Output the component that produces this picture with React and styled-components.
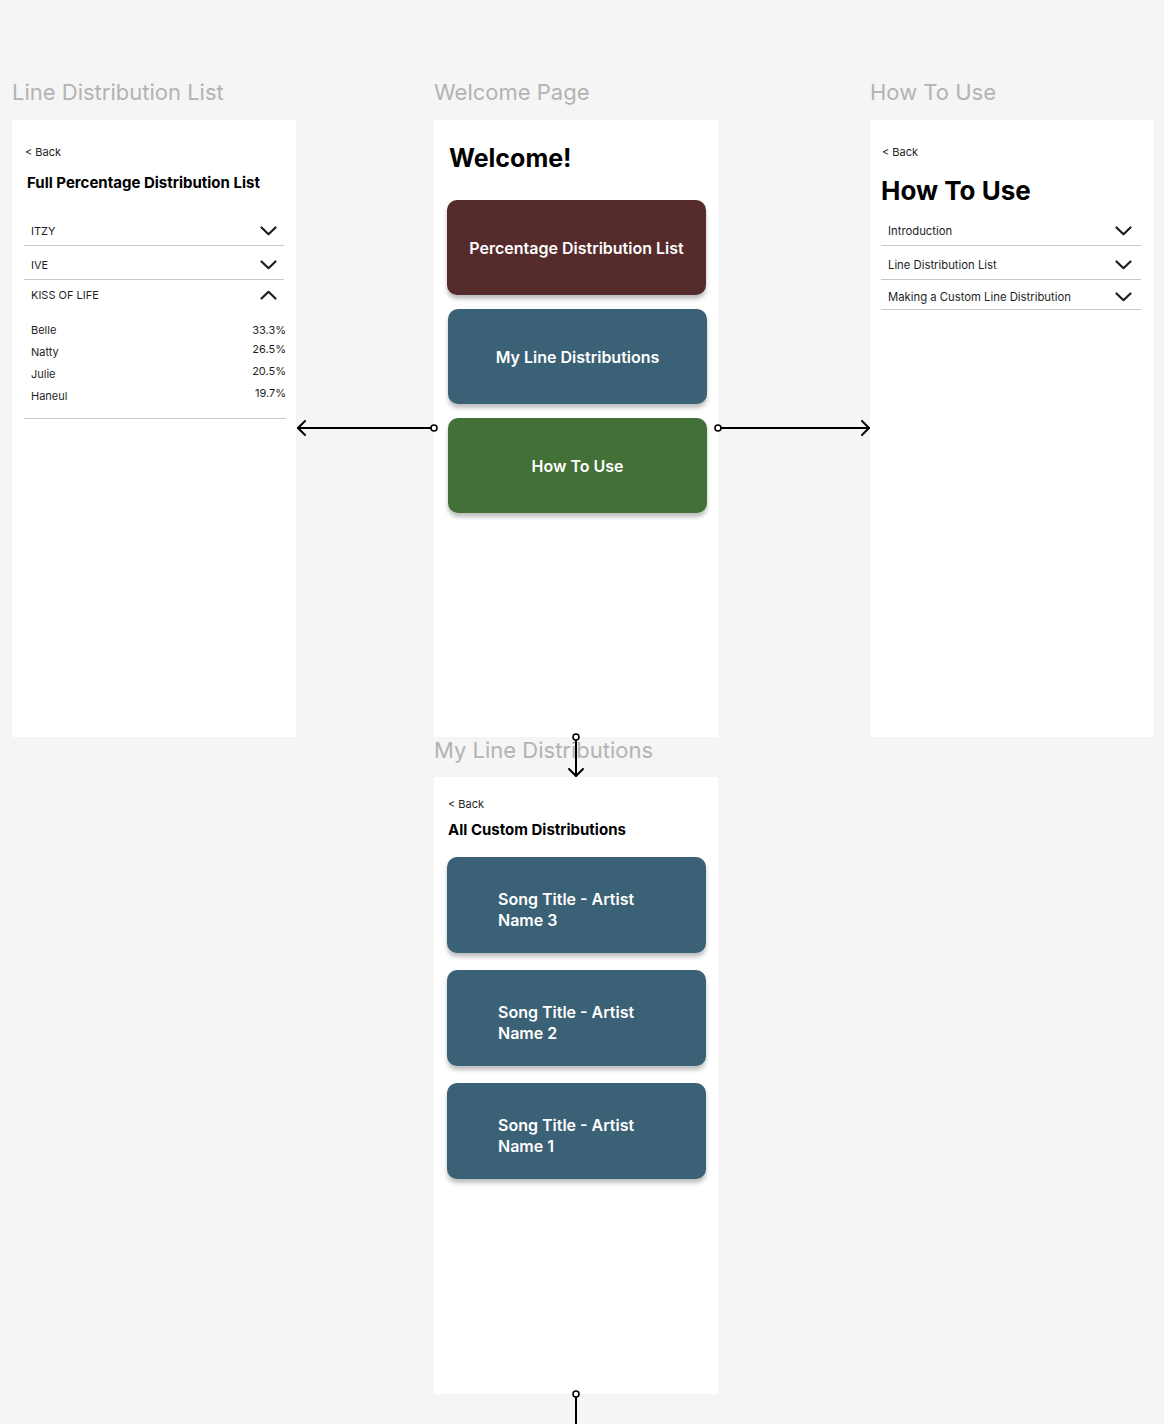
import React from "react";
import styled, { createGlobalStyle } from "styled-components";

const GlobalStyle = createGlobalStyle`
  body {
    margin: 0;
    background: #f5f5f5;
    font-family: Inter, "Noto Sans", sans-serif;
    color: #1e1e1e;
  }
`;

const Canvas = styled.div`
  position: relative;
  width: 1164px;
  min-height: 1424px;
  display: flex;
  align-items: flex-start;
  padding: 76px 0 0 12px;
  box-sizing: border-box;
  overflow: hidden;
`;

const Column = styled.div`
  width: 284px;
  margin-right: ${(p) => p.gap || 0}px;
  display: flex;
  flex-direction: column;
`;

const FrameLabel = styled.div`
  font-size: 22px;
  line-height: ${(p) => (p.lower ? 26 : 32)}px;
  height: ${(p) => (p.lower ? 26 : 32)}px;
  margin-bottom: ${(p) => (p.lower ? 14 : 12)}px;
  color: #b3b3b3;
  white-space: nowrap;
`;

const Frame = styled.div`
  background: #fff;
  height: 617px;
  box-sizing: border-box;
  padding: ${(p) => p.pad || "0"};
  display: flex;
  flex-direction: column;
`;

const Back = styled.div`
  font-size: 11px;
  line-height: 14px;
  margin-left: ${(p) => p.inset || 0}px;
  color: #1e1e1e;
`;

const SmallTitle = styled.div`
  font-size: 15px;
  font-weight: 700;
  line-height: 20px;
  margin: ${(p) => p.m || "0"};
  color: #000;
`;

const BigTitle = styled.div`
  font-size: ${(p) => p.size || 26}px;
  font-weight: 700;
  line-height: 32px;
  margin: ${(p) => p.m || "0"};
  color: #000;
`;

const Accordion = styled.div`
  display: flex;
  flex-direction: column;
  margin: ${(p) => p.m || "0"};
`;

const Row = styled.div`
  height: ${(p) => p.h || 34}px;
  box-sizing: border-box;
  padding: ${(p) => (p.plain ? "0" : "4px")} ${(p) => p.pr || 7}px 0 7px;
  display: flex;
  align-items: center;
  justify-content: space-between;
  font-size: ${(p) => p.fs || 11}px;
  border-bottom: ${(p) => (p.plain ? "none" : "1px solid #c8c8c8")};
`;

const Chevron = styled.svg`
  width: 17px;
  height: 10px;
  flex: none;
  transform: ${(p) => (p.up ? "rotate(180deg)" : "none")} translateY(${(p) => p.dy || 0}px);
`;

const Members = styled.div`
  padding: 9px 0 11px 7px;
  margin-right: -2px;
  border-bottom: 1px solid #c8c8c8;
  display: flex;
  flex-direction: column;
`;

const MemberRow = styled.div`
  height: 22px;
  display: flex;
  align-items: center;
  justify-content: space-between;
  font-size: 11px;
`;

const Percent = styled.span`
  transform: translateY(-${(p) => p.lift || 0}px);
`;

const MenuButton = styled.div`
  height: 95px;
  border-radius: 10px;
  background: ${(p) => p.bg};
  box-shadow: 0 4px 4px rgba(0, 0, 0, 0.25);
  display: flex;
  align-items: center;
  justify-content: center;
  color: #fff;
  font-size: 16px;
  font-weight: 600;
  margin: ${(p) => p.m || "0"};
`;

const SongCard = styled.div`
  height: 96px;
  border-radius: 10px;
  background: #3a6175;
  box-shadow: 0 4px 4px rgba(0, 0, 0, 0.25);
  box-sizing: border-box;
  padding: 10px 0 0 51px;
  display: flex;
  flex-direction: column;
  justify-content: center;
  color: #fff;
  font-size: 16px;
  font-weight: 600;
  margin: ${(p) => p.m || "0"};
`;

const SongLine = styled.div`
  line-height: 21px;
  height: 21px;
`;

const Overlay = styled.svg`
  position: absolute;
  left: 0;
  top: 0;
  width: 1164px;
  height: 1424px;
  pointer-events: none;
`;

const Down = ({ up, dy }) => (
  <Chevron up={up} dy={dy} viewBox="0 0 17 10">
    <path d="M1.5 1.5 L8.5 8.2 L15.5 1.5" fill="none" stroke="#1e1e1e" strokeWidth="2.2" strokeLinecap="round" strokeLinejoin="round" />
  </Chevron>
);

const members = [
  { name: "Belle", pct: "33.3%", lift: 0 },
  { name: "Natty", pct: "26.5%", lift: 3 },
  { name: "Julie", pct: "20.5%", lift: 3 },
  { name: "Haneul", pct: "19.7%", lift: 3 },
];

const Connectors = () => (
  <Overlay viewBox="0 0 1164 1424">
    <g fill="none" stroke="#000" strokeWidth="2" strokeLinecap="round" strokeLinejoin="round">
      <path d="M298 428 H431" />
      <path d="M305 421 L298 428 L305 435" />
      <path d="M721 428 H869" />
      <path d="M862 421 L869 428 L862 435" />
      <path d="M576 740 V776" />
      <path d="M569 769 L576 776 L583 769" />
      <path d="M576 1397 V1424" />
    </g>
    <g fill="#fff" stroke="#000" strokeWidth="1.6">
      <circle cx="434" cy="428" r="3" />
      <circle cx="718" cy="428" r="3" />
      <circle cx="576" cy="737" r="3" />
      <circle cx="576" cy="1394" r="3" />
    </g>
  </Overlay>
);

export default function App() {
  return (
    <>
      <GlobalStyle />
      <Canvas>
        <Column gap={138}>
          <FrameLabel>Line Distribution List</FrameLabel>
          <Frame pad="25px 12px 0 12px">
            <Back inset={1}>&lt; Back</Back>
            <SmallTitle m="14px 0 0 3px">Full Percentage Distribution List</SmallTitle>
            <Accordion m="19px 0 0 0">
              <Row>
                ITZY
                <Down />
              </Row>
              <Row>
                IVE
                <Down dy={-1} />
              </Row>
              <Row plain h={30}>
                KISS OF LIFE
                <Down up />
              </Row>
              <Members>
                {members.map((m) => (
                  <MemberRow key={m.name}>
                    <span>{m.name}</span>
                    <Percent lift={m.lift}>{m.pct}</Percent>
                  </MemberRow>
                ))}
              </Members>
            </Accordion>
          </Frame>
        </Column>

        <Column gap={152}>
          <FrameLabel>Welcome Page</FrameLabel>
          <Frame pad="22px 12px 0 13px">
            <BigTitle size={25} m="0 0 0 2px">Welcome!</BigTitle>
            <MenuButton bg="#552b2b" m="26px 0 0 0">
              Percentage Distribution List
            </MenuButton>
            <MenuButton bg="#3a6175" m="14px -1px 0 1px">
              My Line Distributions
            </MenuButton>
            <MenuButton bg="#427036" m="14px -1px 0 1px">
              How To Use
            </MenuButton>
          </Frame>
          <FrameLabel lower>My Line Distributions</FrameLabel>
          <Frame pad="20px 12px 0 13px">
            <Back inset={1}>&lt; Back</Back>
            <SmallTitle m="9px 0 0 1px">All Custom Distributions</SmallTitle>
            {[3, 2, 1].map((n, i) => (
              <SongCard key={n} m={`${i === 0 ? 17 : 17}px 0 0 0`}>
                <SongLine>Song Title - Artist</SongLine>
                <SongLine>Name {n}</SongLine>
              </SongCard>
            ))}
          </Frame>
        </Column>

        <Column>
          <FrameLabel>How To Use</FrameLabel>
          <Frame pad="25px 13px 0 11px">
            <Back inset={1}>&lt; Back</Back>
            <BigTitle m="16px 0 0 0">How To Use</BigTitle>
            <Accordion m="5px 0 0 0">
              <Row pr={9} fs={11.3}>
                Introduction
                <Down dy={-3} />
              </Row>
              <Row pr={9} fs={11.3}>
                Line Distribution List
                <Down dy={-2} />
              </Row>
              <Row pr={9} h={30} fs={11.3}>
                Making a Custom Line Distribution
                <Down dy={1} />
              </Row>
            </Accordion>
          </Frame>
        </Column>

        <Connectors />
      </Canvas>
    </>
  );
}
